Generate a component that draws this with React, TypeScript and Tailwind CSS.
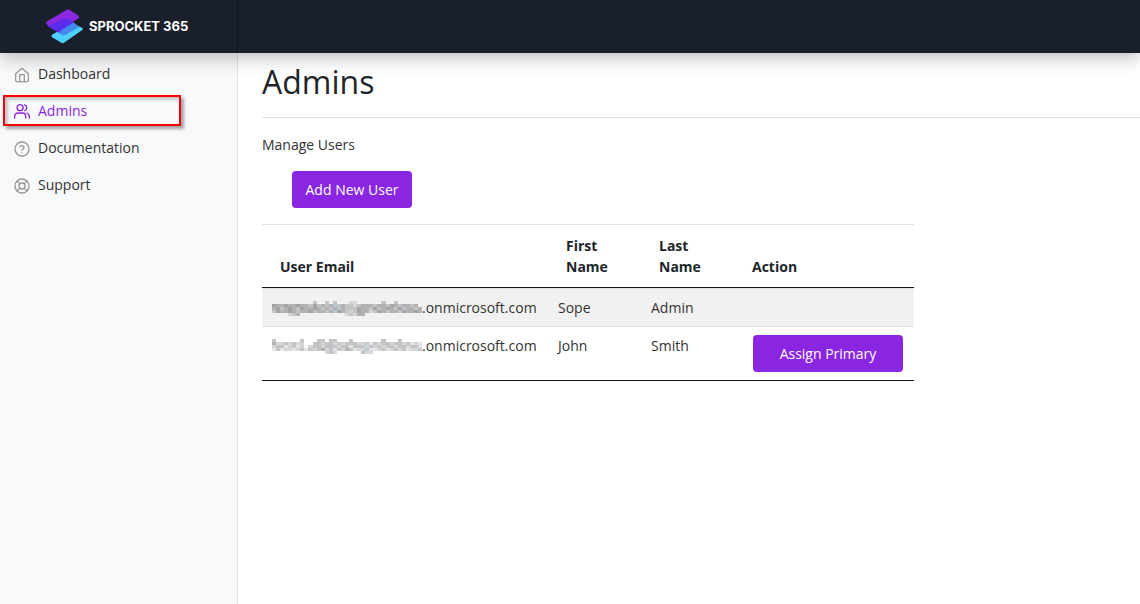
import type { ReactNode } from 'react';

type NavItem = { label: string; icon: ReactNode; active?: boolean };

const navItems: NavItem[] = [
  {
    label: 'Dashboard',
    icon: (
      <>
        <path d="M2.5 10.2 12 2l9.5 8.2V20a2 2 0 0 1-2 2h-15a2 2 0 0 1-2-2Z" />
        <path d="M8.5 22V11.5h7V22" />
      </>
    ),
  },
  {
    label: 'Admins',
    active: true,
    icon: (
      <>
        <path d="M17.5 21v-2.5a5 5 0 0 0-5-5H6a5 5 0 0 0-5 5V21" />
        <circle cx="9.2" cy="5.5" r="4.5" />
        <path d="M23 21v-2.5a5 5 0 0 0-3.5-4.7" />
        <path d="M16 1.2a4.5 4.5 0 0 1 0 8.6" />
      </>
    ),
  },
  {
    label: 'Documentation',
    icon: (
      <>
        <circle cx="12" cy="12" r="10.5" />
        <path d="M9 9a3.1 3.1 0 0 1 6 1c0 2-3 2.7-3 4" />
        <path d="M12 17.5h.01" />
      </>
    ),
  },
  {
    label: 'Support',
    icon: (
      <>
        <circle cx="12" cy="12" r="10.5" />
        <circle cx="12" cy="12" r="4.5" />
        <path d="m4.6 4.6 4.2 4.2M15.2 8.8l4.2-4.2M15.2 15.2l4.2 4.2M8.8 15.2l-4.2 4.2" />
      </>
    ),
  },
];

// One letter per mosaic tile, '.' leaves the tile empty.
const palette: Record<string, string> = {
  a: '#a4a4a6',
  b: '#b2b2b4',
  c: '#c4c4c6',
  d: '#d6d6d8',
  e: '#e4e4e6',
  f: '#c9bfc6',
  g: '#b9c9d1',
};

const users = [
  {
    id: 1,
    mask: [
      '..........c..c.c...dd......c..c......',
      'abbabbabbcacbcbgcbccdcbbbcbbcabcbbcb.',
      'bacbabcabbabcbfbgbcccabbcacbabcafbbcb',
      'cabbabcbbacbbcbgabcdcabbdcabcbbcabbab',
      '....dcb...........dcdbb..............',
    ],
    domain: '.onmicrosoft.com',
    first: 'Sope',
    last: 'Admin',
    primary: true,
  },
  {
    id: 2,
    mask: [
      'c......c...cc.cc...c.......c...c.....',
      'bddcdcdd..ccdccdcdcccddgecdccdccdcede',
      'dccedced.dccdcfcdccecfgdcdcdccdccdcce',
      'eceddedcecdcbdcecdbceddgeedcedcdceddc',
      '.............dcd......fdd............',
    ],
    domain: '.onmicrosoft.com',
    first: 'John',
    last: 'Smith',
    primary: false,
  },
];

function Logo() {
  return (
    <svg width="37" height="35" viewBox="16 10 111 105" strokeWidth="10" strokeLinejoin="round" aria-hidden="true">
      <path d="M38 91 64 76 98 60 121 70 66 108Z" fill="#4dcff7" stroke="#4dcff7" />
      <path d="M56 76 98 50 116 64 73 88Q65 92 59 85Z" fill="#4389ef" />
      <path d="M19 57 75 31 99 50 62 73Q57 77 57 83L24 63Z" fill="#5a2cec" />
      <path d="M22 51 82 16 110 34 97 43 75 31 24 55Z" fill="#8c28e0" stroke="#8c28e0" />
    </svg>
  );
}

function MaskedText({ rows }: { rows: string[] }) {
  return (
    <svg width="150" height="15" viewBox="0 0 37 15" preserveAspectRatio="none" className="mt-0.5 shrink-0" shapeRendering="crispEdges" aria-hidden="true">
      {rows.map((row, y) =>
        [...row].map((tile, x) =>
          tile === '.' ? null : <rect key={`${x}-${y}`} x={x} y={y * 3} width="1" height="3" fill={palette[tile]} />
        )
      )}
    </svg>
  );
}

function Sidebar() {
  return (
    <nav className="w-[238px] shrink-0 border-r border-[#dee2e6] bg-[#f8f9fb] pt-[5px] pl-[3px]">
      <ul className="flex flex-col gap-[6px]">
        {navItems.map(({ label, icon, active }) => (
          <li key={label}>
            <a
              href="#"
              className={`flex h-[31px] w-[178px] items-center gap-2 border-2 pl-[9px] ${
                active
                  ? 'border-[#f5000a] text-[#8a25e2] shadow-[3px_3px_3px_rgba(0,0,0,0.35),inset_3px_3px_3px_rgba(0,0,0,0.2)]'
                  : 'border-transparent text-[#333]'
              }`}
            >
              <svg
                viewBox="0 0 24 24"
                className={`mt-0.5 size-4 ${active ? 'text-[#8a25e2]' : 'text-[#999]'}`}
                fill="none"
                stroke="currentColor"
                strokeWidth="2"
                strokeLinecap="round"
                strokeLinejoin="round"
                aria-hidden="true"
              >
                {icon}
              </svg>
              {label}
            </a>
          </li>
        ))}
      </ul>
    </nav>
  );
}

function UserTable() {
  return (
    <table className="w-[652px] border-separate border-spacing-0 border-t border-b border-t-[#dee2e6] border-b-[#111] text-left">
      <thead>
        <tr className="align-bottom leading-[21px] text-[#212529]">
          <th className="w-[286px] border-b border-[#111] px-[18px] py-[10px] font-bold">User Email</th>
          <th className="w-[93px] border-b border-[#111] px-[18px] py-[10px] font-bold">First Name</th>
          <th className="w-[93px] border-b border-[#111] px-[18px] py-[10px] font-bold">Last Name</th>
          <th className="border-b border-[#111] px-[18px] py-[10px] font-bold">Action</th>
        </tr>
      </thead>
      <tbody>
        {users.map((user) => (
          <tr key={user.id} className="align-top leading-[21px] odd:bg-[#f1f1f1]">
            <td className="border-t border-[#dee2e6] px-[10px] py-2">
              <span className="flex items-center">
                <MaskedText rows={user.mask} />
                {user.domain}
              </span>
            </td>
            <td className="border-t border-[#dee2e6] px-[10px] py-2">{user.first}</td>
            <td className="border-t border-[#dee2e6] px-[10px] py-2">{user.last}</td>
            <td className="border-t border-[#dee2e6] px-[11px] py-2">
              {!user.primary && (
                <button type="button" className="ml-auto block h-[37px] w-[150px] rounded bg-[#8a25e2] text-white">
                  Assign Primary
                </button>
              )}
            </td>
          </tr>
        ))}
      </tbody>
    </table>
  );
}

export default function App() {
  return (
    <div className="flex min-h-screen flex-col bg-white font-['Open_Sans',sans-serif] text-sm text-[#333]">
      <header className="relative flex h-[53px] bg-[#1a1f2c] shadow-[0_8px_16px_rgba(0,0,0,0.15),0_2px_16px_rgba(0,0,0,0.1)]">
        <a href="#" className="flex w-[238px] items-center gap-[6px] border-r border-[#121620] pl-[46px] font-['Inter',sans-serif] text-[13px] font-bold text-white">
          <Logo />
          SPROCKET 365
        </a>
      </header>
      <div className="flex flex-1">
        <Sidebar />
        <main className="flex-1 pl-6">
          <h1 className="border-b border-[#dee2e6] pt-[9px] pb-[15px] text-[32px] leading-[40px] text-[#212529]">Admins</h1>
          <p className="mt-4 leading-[21px]">Manage Users</p>
          <button type="button" className="mt-4 mb-4 ml-[30px] block h-[37px] w-[120px] rounded bg-[#8a25e2] text-white">
            Add New User
          </button>
          <UserTable />
        </main>
      </div>
    </div>
  );
}
